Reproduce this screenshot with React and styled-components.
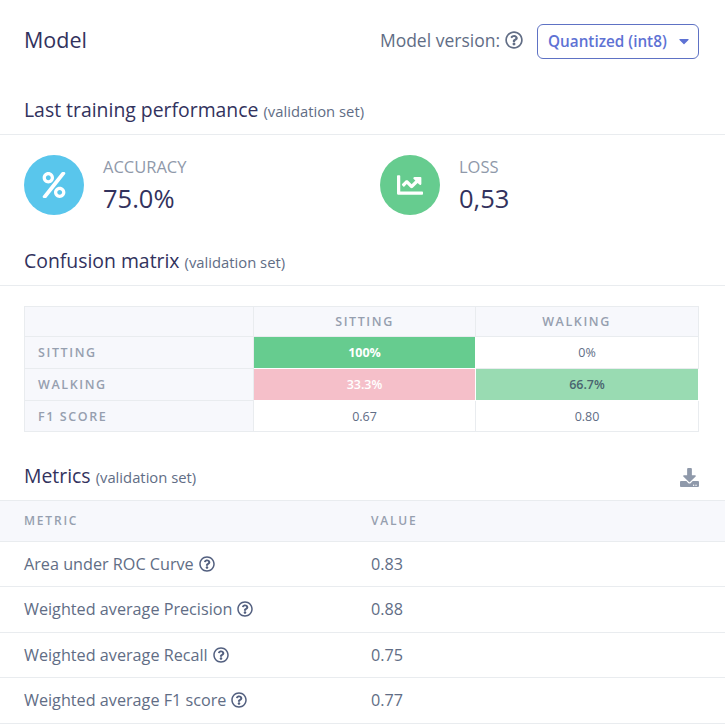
import styled, { createGlobalStyle } from 'styled-components';
import {
  FaCaretDown,
  FaChartLine,
  FaDownload,
  FaPercent,
  FaRegQuestionCircle,
} from 'react-icons/fa';

const GlobalStyle = createGlobalStyle`
  html, body {
    margin: 0;
    padding: 0;
    background: #fff;
    font-family: "Open Sans", "Liberation Sans", sans-serif;
  }
`;

const Page = styled.div`
  width: 725px;
  height: 725px;
  overflow: hidden;
  background: #fff;
  color: #32325d;
`;

const TopBar = styled.header`
  display: flex;
  align-items: center;
  justify-content: space-between;
  height: 82px;
  padding: 0 26px 0 24px;
  box-sizing: border-box;
`;

const ModelTitle = styled.h1`
  margin: 0 0 3px;
  font-size: 21.5px;
  font-weight: 500;
  color: #32325d;
`;

const VersionGroup = styled.div`
  display: flex;
  align-items: center;
`;

const VersionLabel = styled.span`
  display: inline-flex;
  align-items: center;
  gap: 5px;
  margin: 0 14px 3px 0;
  font-size: 17.5px;
  color: #616d85;
`;

const VersionButton = styled.button`
  display: inline-flex;
  align-items: center;
  justify-content: space-between;
  width: 162px;
  height: 35px;
  padding: 0 6px 0 10px;
  border: 1px solid #5e72c4;
  border-radius: 6px;
  background: #fff;
  color: #5e72d4;
  font-family: inherit;
  font-size: 15.3px;
  font-weight: 600;
`;

const SectionHead = styled.div`
  display: flex;
  align-items: flex-end;
  justify-content: space-between;
  height: ${p => p.$height}px;
  padding: 0 26px 10px 24px;
  border-bottom: 1px solid #e9ecef;
  box-sizing: border-box;
`;

const SectionTitle = styled.h2`
  margin: 0;
  font-size: 19.4px;
  line-height: 26px;
  font-weight: 500;
  color: #32325d;
`;

const SectionNote = styled.small`
  font-size: 14.8px;
  font-weight: 400;
  color: #616d85;
`;

const Stats = styled.div`
  display: grid;
  grid-template-columns: 356px 1fr;
  padding: 20px 24px 0;
  height: 93px;
  box-sizing: border-box;
`;

const Stat = styled.div`
  display: flex;
  gap: 19px;
  align-items: flex-start;
`;

const StatCircle = styled.div`
  display: flex;
  align-items: center;
  justify-content: center;
  width: 60px;
  height: 60px;
  border-radius: 50%;
  background: ${p => p.$color};
  color: #fff;
  font-size: ${p => p.$iconSize}px;
`;

const StatText = styled.div`
  display: flex;
  flex-direction: column;
  padding-top: 2px;
`;

const StatLabel = styled.span`
  font-size: 16.5px;
  line-height: 20px;
  font-weight: 500;
  color: #8f99aa;
  text-transform: uppercase;
`;

const StatValue = styled.span`
  margin-top: 4px;
  font-size: 25.5px;
  line-height: 34px;
  font-weight: 500;
  color: #32325d;
`;

const MatrixWrap = styled.div`
  padding: 20px 26px 0 24px;
  height: 166px;
  box-sizing: border-box;
`;

const Matrix = styled.table`
  width: 674px;
  table-layout: fixed;
  border-collapse: collapse;
  font-size: 12.5px;
`;

const MatrixCol = styled.col`
  width: ${p => p.$width}px;
`;

const MatrixRow = styled.tr`
  height: ${p => p.$height}px;
`;

const MatrixHeader = styled.th`
  padding: 0 ${p => p.$endPad || 13}px 0 13px;
  border: 1px solid #e9ecef;
  background: #f7f8fc;
  color: #969faf;
  font-size: 12.5px;
  font-weight: 600;
  letter-spacing: 1.6px;
  text-align: ${p => p.$align || 'center'};
  text-transform: uppercase;
`;

const MatrixCell = styled.td`
  padding: 0;
  border: 1px solid ${p => (p.$bg ? '#fff' : '#e9ecef')};
  background: ${p => p.$bg || '#fff'};
  color: ${p => p.$color || '#616d85'};
  font-weight: ${p => p.$weight || 400};
  text-align: center;
`;

const MetricsTable = styled.table`
  width: 725px;
  table-layout: fixed;
  border-collapse: collapse;
`;

const MetricsCol = styled.col`
  width: ${p => p.$width}px;
`;

const MetricsHeadRow = styled.tr`
  height: 40px;
`;

const MetricsHeader = styled.th`
  padding: 0 0 0 ${p => p.$pad}px;
  background: #f7f8fc;
  border-bottom: 1px solid #e9ecef;
  color: #969faf;
  font-size: 12px;
  font-weight: 600;
  letter-spacing: 1.8px;
  text-align: left;
  text-transform: uppercase;
`;

const MetricsRow = styled.tr`
  height: 45.5px;
`;

const MetricsCell = styled.td`
  padding: 0 0 0 ${p => p.$pad}px;
  border-bottom: 1px solid #e9ecef;
  color: #616d85;
  font-size: 16.2px;
`;

const HelpIcon = styled(FaRegQuestionCircle)`
  margin-left: 5px;
  vertical-align: -2px;
  color: #525f7f;
  font-size: 16px;
`;

const DownloadIcon = styled(FaDownload)`
  margin-bottom: 3px;
  color: #8f99aa;
  font-size: 19px;
`;

const matrixRows = [
  {
    label: 'Sitting',
    height: 32,
    cells: [
      { text: '100%', bg: '#66cc8f', color: '#fff', weight: 700 },
      { text: '0%' },
    ],
  },
  {
    label: 'Walking',
    height: 32,
    cells: [
      { text: '33.3%', bg: '#f5bfc9', color: '#fff', weight: 600 },
      { text: '66.7%', bg: '#99dbb2', color: '#4a6570', weight: 600 },
    ],
  },
  {
    label: 'F1 Score',
    height: 31,
    cells: [{ text: '0.67' }, { text: '0.80' }],
  },
];

const metrics = [
  { name: 'Area under ROC Curve', value: '0.83' },
  { name: 'Weighted average Precision', value: '0.88' },
  { name: 'Weighted average Recall', value: '0.75' },
  { name: 'Weighted average F1 score', value: '0.77' },
];

const App = () => {
  return (
    <Page>
      <GlobalStyle />
      <TopBar>
        <ModelTitle>Model</ModelTitle>
        <VersionGroup>
          <VersionLabel>
            Model version: <FaRegQuestionCircle size={18} />
          </VersionLabel>
          <VersionButton>
            Quantized (int8) <FaCaretDown size={16} />
          </VersionButton>
        </VersionGroup>
      </TopBar>

      <SectionHead $height={53}>
        <SectionTitle>
          Last training performance <SectionNote>(validation set)</SectionNote>
        </SectionTitle>
      </SectionHead>

      <Stats>
        <Stat>
          <StatCircle $color="#59c6ec" $iconSize={26}>
            <FaPercent />
          </StatCircle>
          <StatText>
            <StatLabel>Accuracy</StatLabel>
            <StatValue>75.0%</StatValue>
          </StatText>
        </Stat>
        <Stat>
          <StatCircle $color="#66cc8f" $iconSize={26}>
            <FaChartLine />
          </StatCircle>
          <StatText>
            <StatLabel>Loss</StatLabel>
            <StatValue>0,53</StatValue>
          </StatText>
        </Stat>
      </Stats>

      <SectionHead $height={58}>
        <SectionTitle>
          Confusion matrix <SectionNote>(validation set)</SectionNote>
        </SectionTitle>
      </SectionHead>

      <MatrixWrap>
        <Matrix>
          <colgroup>
            <MatrixCol $width={229} />
            <MatrixCol $width={222} />
            <MatrixCol $width={223} />
          </colgroup>
          <tbody>
            <MatrixRow $height={30}>
              <MatrixHeader />
              <MatrixHeader>Sitting</MatrixHeader>
              <MatrixHeader $endPad={34}>Walking</MatrixHeader>
            </MatrixRow>
            {matrixRows.map(row => (
              <MatrixRow key={row.label} $height={row.height}>
                <MatrixHeader $align="left">{row.label}</MatrixHeader>
                {row.cells.map((cell, i) => (
                  <MatrixCell
                    key={i}
                    $bg={cell.bg}
                    $color={cell.color}
                    $weight={cell.weight}
                  >
                    {cell.text}
                  </MatrixCell>
                ))}
              </MatrixRow>
            ))}
          </tbody>
        </Matrix>
      </MatrixWrap>

      <SectionHead $height={49}>
        <SectionTitle>
          Metrics <SectionNote>(validation set)</SectionNote>
        </SectionTitle>
        <DownloadIcon />
      </SectionHead>

      <MetricsTable>
        <colgroup>
          <MetricsCol $width={371} />
          <MetricsCol $width={354} />
        </colgroup>
        <thead>
          <MetricsHeadRow>
            <MetricsHeader $pad={24}>Metric</MetricsHeader>
            <MetricsHeader $pad={0}>Value</MetricsHeader>
          </MetricsHeadRow>
        </thead>
        <tbody>
          {metrics.map(metric => (
            <MetricsRow key={metric.name}>
              <MetricsCell $pad={24}>
                {metric.name}
                <HelpIcon />
              </MetricsCell>
              <MetricsCell $pad={0}>{metric.value}</MetricsCell>
            </MetricsRow>
          ))}
        </tbody>
      </MetricsTable>
    </Page>
  );
};

export default App;
